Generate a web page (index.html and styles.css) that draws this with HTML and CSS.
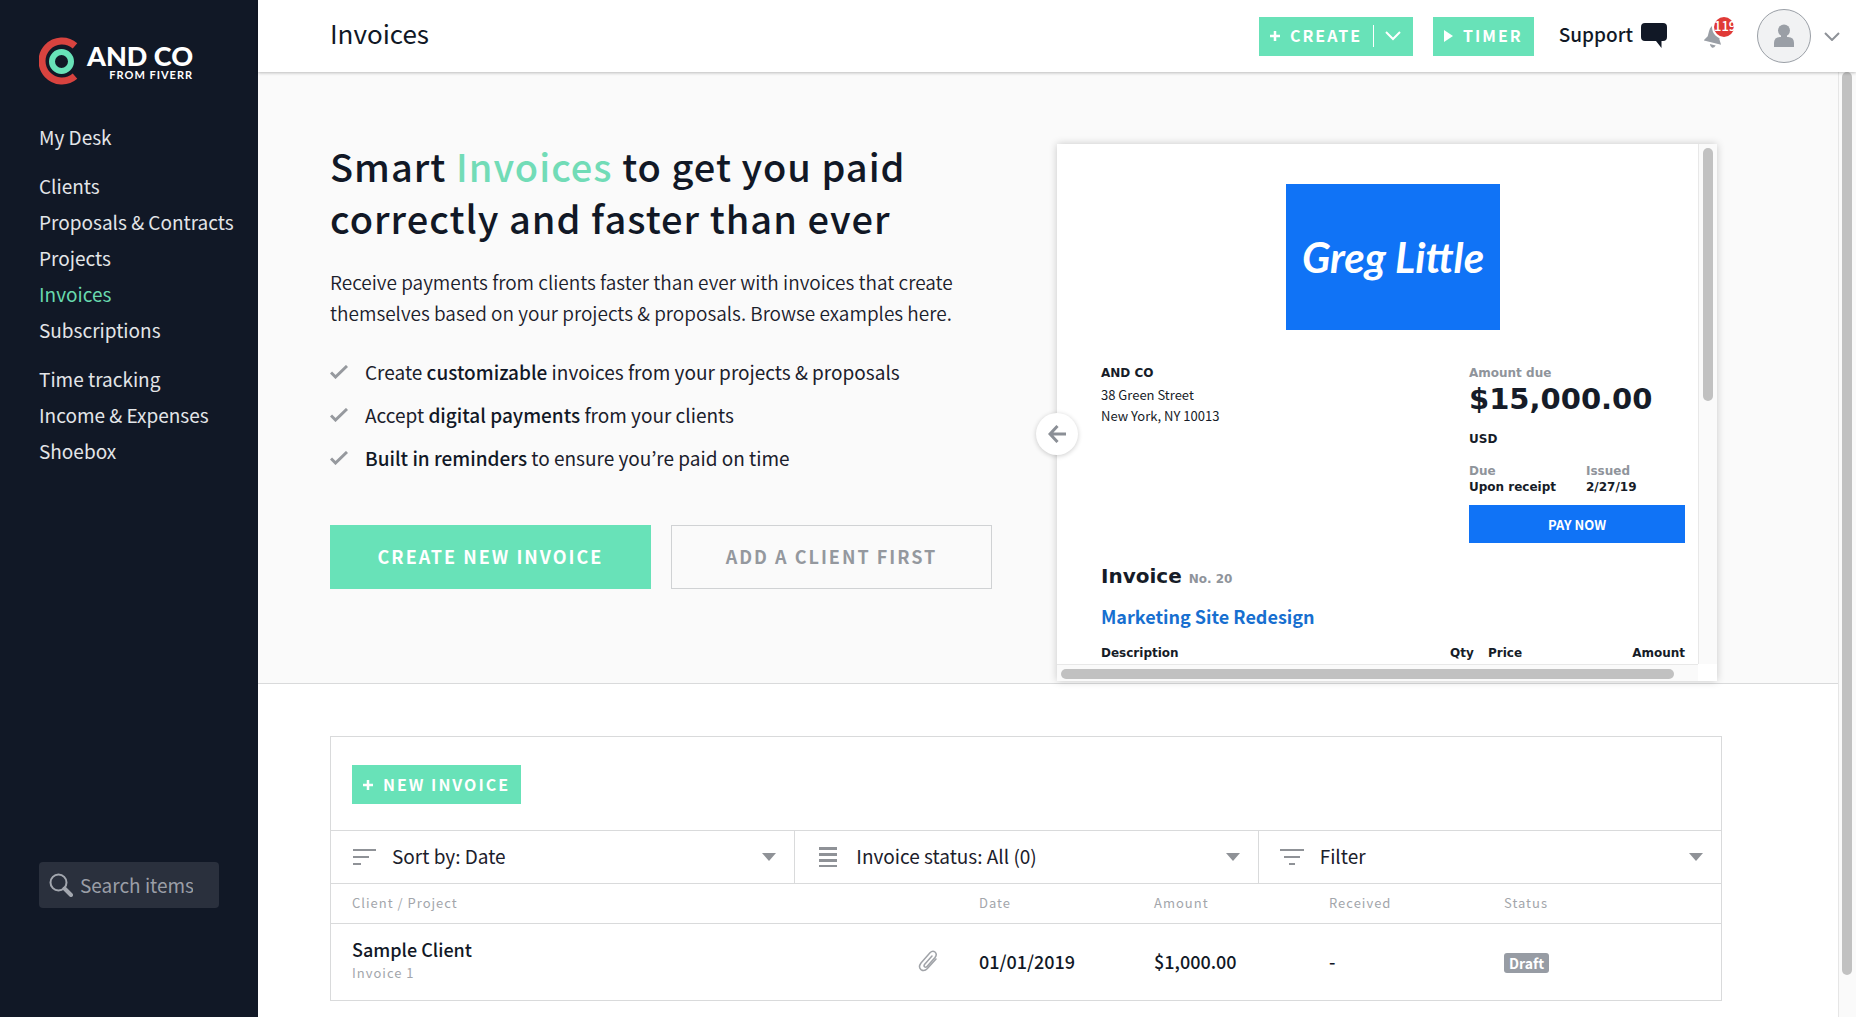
FILE: index.html
```html
<!DOCTYPE html>
<html lang="en">
<head>
    <meta charset="UTF-8">
    <meta name="viewport" content="width=device-width, initial-scale=1.0">
    <title>Invoices</title>
    <link rel="stylesheet" href="styles.css">
</head>
<body>
    <aside class="sidebar">
        <a class="logo" href="#">
            <svg class="logo-mark" width="46" height="48" viewBox="0 0 46 48" aria-hidden="true">
                <path d="M36 8.800A20 20 0 1 0 36 39.200" fill="none" stroke="#d8433f" stroke-width="7"/>
                <circle cx="22.500" cy="24.500" r="9.500" fill="none" stroke="#68e2b8" stroke-width="6"/>
            </svg>
            <span class="logo-text">
                <span class="logo-name">AND CO</span>
                <span class="logo-sub">FROM FIVERR</span>
            </span>
        </a>
        <nav class="nav">
            <ul>
                <li><a href="#">My Desk</a></li>
            </ul>
            <ul>
                <li><a href="#">Clients</a></li>
                <li><a href="#">Proposals &amp; Contracts</a></li>
                <li><a href="#">Projects</a></li>
                <li><a class="active" href="#">Invoices</a></li>
                <li><a href="#">Subscriptions</a></li>
            </ul>
            <ul>
                <li><a href="#">Time tracking</a></li>
                <li><a href="#">Income &amp; Expenses</a></li>
                <li><a href="#">Shoebox</a></li>
            </ul>
        </nav>
        <label class="search">
            <svg width="24" height="24" viewBox="0 0 24 24" fill="none" stroke="#a3a7af" aria-hidden="true">
                <circle cx="9.500" cy="9.500" r="8" stroke-width="2"/>
                <path d="M15.500 15.500L22 22" stroke-width="4" stroke-linecap="round"/>
            </svg>
            <input type="search" placeholder="Search items" aria-label="Search items">
        </label>
    </aside>

    <div class="main">
        <header class="topbar">
            <h2 class="page-title">Invoices</h2>
            <div class="create-group">
                <button class="btn btn-create" type="button">
                    <svg width="10" height="10" viewBox="0 0 10 10" stroke="#fff" stroke-width="2.500" aria-hidden="true"><path d="M5 0v10M0 5h10"/></svg>
                    <span>CREATE</span>
                </button>
                <button class="btn btn-more" type="button" aria-label="More">
                    <svg width="16" height="10" viewBox="0 0 16 10" fill="none" stroke="#fff" stroke-width="2" aria-hidden="true"><path d="M1 1l7 7 7-7"/></svg>
                </button>
            </div>
            <button class="btn btn-timer" type="button">
                <svg width="9" height="12" viewBox="0 0 9 12" fill="#fff" aria-hidden="true"><path d="M0 0l9 6-9 6z"/></svg>
                <span>TIMER</span>
            </button>
            <a class="support" href="#">
                <span>Support</span>
                <svg width="26" height="26" viewBox="0 0 26 26" fill="#111826" aria-hidden="true"><path d="M4 0h18q4 0 4 4v10q0 4-4 4h-1.500v7L15 18H4q-4 0-4-4V4q0-4 4-4z"/></svg>
            </a>
            <button class="bell" type="button" aria-label="Notifications">
                <svg width="22" height="26" viewBox="0 0 22 26" fill="#9a9fa6" aria-hidden="true">
                    <g transform="rotate(14 11 13)">
                        <path d="M10 2q6 1 6 8v5l3 5H1l3-5v-5q0-7 6-8z"/>
                        <path d="M8 22h6q-1 3-3 3t-3-3z"/>
                    </g>
                </svg>
                <span class="badge">119</span>
            </button>
            <button class="avatar" type="button" aria-label="Account">
                <svg width="20" height="24" viewBox="0 0 20 24" fill="#9a9fa6" aria-hidden="true">
                    <circle cx="10" cy="6.500" r="6"/>
                    <rect x="7" y="10" width="6" height="5"/>
                    <path d="M0 23v-4q0-6 6-6h8q6 0 6 6v4z"/>
                </svg>
            </button>
            <svg class="account-arrow" width="16" height="9" viewBox="0 0 16 9" fill="none" stroke="#8e9298" stroke-width="2" aria-hidden="true"><path d="M1 1l7 7 7-7"/></svg>
        </header>

        <div class="scroll-area">
            <main class="content">
                <section class="hero">
                    <div class="hero-text">
                        <h1>Smart <span>Invoices</span> to get you paid correctly and faster than ever</h1>
                        <p>Receive payments from clients faster than ever with invoices that create themselves based on your projects &amp; proposals. Browse examples here.</p>
                        <ul class="checks">
                            <li>
                                <svg width="18" height="14" viewBox="0 0 18 14" fill="none" stroke="#96999e" stroke-width="3" aria-hidden="true"><path d="M1 7.500l4.500 4.500L17 1"/></svg>
                                <span>Create <b>customizable</b> invoices from your projects &amp; proposals</span>
                            </li>
                            <li>
                                <svg width="18" height="14" viewBox="0 0 18 14" fill="none" stroke="#96999e" stroke-width="3" aria-hidden="true"><path d="M1 7.500l4.500 4.500L17 1"/></svg>
                                <span>Accept <b>digital payments</b> from your clients</span>
                            </li>
                            <li>
                                <svg width="18" height="14" viewBox="0 0 18 14" fill="none" stroke="#96999e" stroke-width="3" aria-hidden="true"><path d="M1 7.500l4.500 4.500L17 1"/></svg>
                                <span><b>Built in reminders</b> to ensure you’re paid on time</span>
                            </li>
                        </ul>
                        <div class="hero-buttons">
                            <button class="btn-big btn-primary" type="button">CREATE NEW INVOICE</button>
                            <button class="btn-big btn-outline" type="button">ADD A CLIENT FIRST</button>
                        </div>
                    </div>

                    <div class="preview">
                        <div class="paper">
                            <div class="brand">Greg Little</div>
                            <div class="paper-top">
                                <address>
                                    <b>AND CO</b>
                                    38 Green Street<br>
                                    New York, NY 10013
                                </address>
                                <div class="due">
                                    <div class="muted">Amount due</div>
                                    <div class="total">$15,000.00</div>
                                    <div class="currency">USD</div>
                                    <dl class="dates">
                                        <div>
                                            <dt>Due</dt>
                                            <dd>Upon receipt</dd>
                                        </div>
                                        <div>
                                            <dt>Issued</dt>
                                            <dd>2/27/19</dd>
                                        </div>
                                    </dl>
                                    <button class="pay" type="button">PAY NOW</button>
                                </div>
                            </div>
                            <h3>Invoice <small>No. 20</small></h3>
                            <h4>Marketing Site Redesign</h4>
                            <table class="lines">
                                <thead>
                                    <tr>
                                        <th>Description</th>
                                        <th class="qty">Qty</th>
                                        <th class="price">Price</th>
                                        <th class="sum">Amount</th>
                                    </tr>
                                </thead>
                            </table>
                        </div>
                        <div class="track-v"><div class="thumb"></div></div>
                        <div class="track-h"><div class="thumb"></div></div>
                        <button class="prev" type="button" aria-label="Previous">
                            <svg width="18" height="18" viewBox="0 0 18 18" fill="none" stroke="#8b8f96" stroke-width="3" aria-hidden="true"><path d="M9.500 1L2 9l7.500 8M2 9h16"/></svg>
                        </button>
                    </div>
                </section>

                <section class="invoices">
                    <div class="toolbar">
                        <button class="btn btn-new" type="button">
                            <svg width="10" height="10" viewBox="0 0 10 10" stroke="#fff" stroke-width="2.500" aria-hidden="true"><path d="M5 0v10M0 5h10"/></svg>
                            <span>NEW INVOICE</span>
                        </button>
                    </div>
                    <div class="filters">
                        <label class="filter">
                            <svg width="24" height="24" viewBox="0 0 24 24" fill="#8f9297" aria-hidden="true"><path d="M1 4h23v2H1zM1 11h16v2H1zM1 18h8v2H1z"/></svg>
                            <select aria-label="Sort">
                                <option>Sort by: Date</option>
                            </select>
                            <svg class="caret" width="14" height="8" viewBox="0 0 14 8" fill="#8f9297" aria-hidden="true"><path d="M0 0h14L7 8z"/></svg>
                        </label>
                        <label class="filter">
                            <svg width="24" height="24" viewBox="0 0 24 24" fill="#8f9297" aria-hidden="true"><path d="M3 2h18v3H3zM3 8h18v3H3zM3 14h18v3H3zM3 20h18v2H3z"/></svg>
                            <select aria-label="Invoice status">
                                <option>Invoice status: All (0)</option>
                            </select>
                            <svg class="caret" width="14" height="8" viewBox="0 0 14 8" fill="#8f9297" aria-hidden="true"><path d="M0 0h14L7 8z"/></svg>
                        </label>
                        <label class="filter">
                            <svg width="24" height="24" viewBox="0 0 24 24" fill="#8f9297" aria-hidden="true"><path d="M0 4h24v2H0zM4 11h16v2H4zM9 18h6v2H9z"/></svg>
                            <select aria-label="Filter">
                                <option>Filter</option>
                            </select>
                            <svg class="caret" width="14" height="8" viewBox="0 0 14 8" fill="#8f9297" aria-hidden="true"><path d="M0 0h14L7 8z"/></svg>
                        </label>
                    </div>
                    <table class="list">
                        <thead>
                            <tr>
                                <th>Client / Project</th>
                                <th class="col-clip"></th>
                                <th class="col">Date</th>
                                <th class="col">Amount</th>
                                <th class="col">Received</th>
                                <th class="col-status">Status</th>
                            </tr>
                        </thead>
                        <tbody>
                            <tr>
                                <td>
                                    <div>Sample Client</div>
                                    <div class="sub">Invoice 1</div>
                                </td>
                                <td>
                                    <svg class="clip" width="20" height="22" viewBox="0 0 20 22" fill="none" stroke="#a0a3a8" stroke-width="1.500" stroke-linecap="round" aria-hidden="true"><path d="M14 6L6.500 14.500q-1 1.500.2 2.400 1.200.8 2.300-.4L17 7.500q2.500-3.300 0-5.500-2.500-1.800-5 .8L3 13q-3 4 0 6.600 3.200 2.400 6.400-1L18 9"/></svg>
                                </td>
                                <td>01/01/2019</td>
                                <td>$1,000.00</td>
                                <td>-</td>
                                <td><span class="tag">Draft</span></td>
                            </tr>
                        </tbody>
                    </table>
                </section>
            </main>
            <div class="page-track"><div class="thumb"></div></div>
        </div>
    </div>
</body>
</html>
```
FILE: styles.css
```css
* {
    box-sizing: border-box;
}

body {
    display: flex;
    height: 100vh;
    margin: 0;
    overflow: hidden;
    background-color: #fff;
    color: #1b202b;
    font-family: "Noto Sans CJK KR", "Open Sans", sans-serif;
    font-size: 19px;
}

h1, h2, h3, h4, p, ul, dl, dd {
    margin: 0;
    padding: 0;
}

ul {
    list-style: none;
}

a {
    color: inherit;
    text-decoration: none;
}

button, input, select {
    font-family: inherit;
    font-size: inherit;
    color: inherit;
    border: none;
    padding: 0;
    background: none;
}

button {
    cursor: pointer;
}

svg {
    display: block;
    flex: none;
}

/* Sidebar */
.sidebar {
    display: flex;
    flex-direction: column;
    flex: none;
    width: 258px;
    padding: 37px 0 109px 39px;
    background-color: #111826;
    color: #e3e5e8;
}

.logo {
    display: flex;
    gap: 2px;
    color: #fff;
    font-family: Lato, sans-serif;
}

.logo-text {
    display: flex;
    flex-direction: column;
    align-items: flex-end;
    padding-top: 6px;
}

.logo-name {
    font-size: 27px;
    line-height: 26px;
    font-weight: 900;
}

.logo-sub {
    font-size: 11px;
    line-height: 12px;
    font-weight: 700;
    letter-spacing: 1px;
}

.nav {
    display: flex;
    flex-direction: column;
    gap: 13px;
    margin-top: 34px;
    line-height: 36px;
}

.nav .active {
    color: #68d9ae;
}

.search {
    display: flex;
    align-items: center;
    gap: 7px;
    width: 180px;
    height: 46px;
    margin-top: auto;
    padding-left: 10px;
    border-radius: 4px;
    background-color: #2a303d;
}

.search input {
    width: 130px;
    padding-bottom: 2px;
    outline: none;
}

.search input::placeholder {
    color: #9a9ea7;
    opacity: 1;
}

/* Top bar */
.main {
    display: flex;
    flex-direction: column;
    flex: 1;
    min-width: 0;
}

.topbar {
    display: flex;
    align-items: center;
    flex: none;
    height: 72px;
    padding: 0 16px 0 72px;
    background-color: #fff;
    box-shadow: 0 1px 3px rgba(0, 0, 0, 0.25);
    position: relative;
    z-index: 1;
}

.page-title {
    margin-right: auto;
    padding-bottom: 6px;
    font-size: 26px;
    line-height: 36px;
    font-weight: 400;
    color: #111826;
}

.btn {
    display: flex;
    align-items: center;
    gap: 10px;
    height: 39px;
    padding: 0 11px;
    background-color: #68e2b8;
    color: #fff;
    font-size: 16px;
    font-weight: 700;
    letter-spacing: 2px;
}

.btn span {
    padding-bottom: 2px;
}

.create-group {
    display: flex;
    align-items: center;
    margin-right: 20px;
    background-color: #68e2b8;
}

.btn-more {
    height: 22px;
    padding: 0 12px 0 11px;
    border-left: 1px solid #fff;
}

.btn-timer {
    margin-right: 25px;
}

.support {
    display: flex;
    align-items: center;
    gap: 8px;
    margin-right: 37px;
    font-weight: 500;
    color: #111826;
}

.support span {
    padding-bottom: 6px;
}

.bell {
    position: relative;
    margin-right: 31px;
}

.badge {
    position: absolute;
    top: -6px;
    left: 10px;
    width: 20px;
    height: 20px;
    border-radius: 10px;
    background-color: #e03a37;
    box-shadow: 0 0 0 2px #fff;
    color: #fff;
    font-size: 13px;
    line-height: 18px;
    font-weight: 500;
}

.avatar {
    display: flex;
    align-items: center;
    justify-content: center;
    width: 54px;
    height: 54px;
    margin-right: 13px;
    border: 1px solid #9a9fa6;
    border-radius: 50%;
    background-color: #f1f2f3;
}

/* Page body */
.scroll-area {
    display: flex;
    flex: 1;
    min-height: 0;
}

.content {
    flex: 1;
    min-width: 0;
    overflow: hidden;
}

.page-track {
    flex: none;
    width: 18px;
    padding: 0 4px 42px 3px;
    border-left: 1px solid #e6e6e6;
    background-color: #fafafa;
}

.thumb {
    border-radius: 5px;
    background-color: #c1c1c1;
}

.page-track .thumb {
    height: 100%;
}

.hero {
    display: flex;
    justify-content: space-between;
    padding: 68px 121px 2px 72px;
    border-bottom: 1px solid #d9dadb;
    background-color: #fafafa;
}

.hero-text {
    width: 662px;
}

h1 {
    width: 600px;
    font-size: 38px;
    line-height: 52px;
    font-weight: 500;
    letter-spacing: 1px;
    color: #111826;
}

h1 span {
    color: #72dcb7;
}

.hero-text p {
    margin-top: 22px;
    padding-right: 20px;
    line-height: 31px;
    font-weight: 350;
}

.checks {
    margin-top: 22px;
    line-height: 43px;
}

.checks li {
    display: flex;
    align-items: center;
    gap: 17px;
}

.checks b {
    font-weight: 500;
    color: #111826;
}

.hero-buttons {
    display: flex;
    gap: 20px;
    margin-top: 46px;
}

.btn-big {
    width: 321px;
    height: 64px;
    padding-bottom: 2px;
    font-size: 18px;
    font-weight: 700;
    letter-spacing: 2px;
}

.btn-primary {
    background-color: #68e2b8;
    color: #fff;
}

.btn-outline {
    border: 1px solid #d0d2d4;
    color: #94989e;
}

/* Invoice preview */
.preview {
    display: grid;
    grid-template-columns: 1fr 19px;
    grid-template-rows: 1fr 17px;
    width: 660px;
    margin-top: 4px;
    position: relative;
    background-color: #fff;
    box-shadow: 0 0 8px rgba(0, 0, 0, 0.2);
    color: #161c28;
}

.paper {
    padding: 40px 13px 0 44px;
    font-family: "DejaVu Sans", sans-serif;
    font-size: 12px;
    font-weight: 700;
}

.brand {
    width: 214px;
    margin: 0 auto 33px;
    background-color: #1073f6;
    color: #fff;
    font-family: Lato, cursive;
    font-size: 42px;
    line-height: 146px;
    font-style: italic;
    text-align: center;
    white-space: nowrap;
}

.paper-top {
    display: flex;
    justify-content: space-between;
    line-height: 21px;
}

address {
    font-family: "Noto Sans CJK KR", sans-serif;
    font-size: 13px;
    font-style: normal;
    font-weight: 400;
}

address b {
    display: block;
    font-family: "DejaVu Sans", sans-serif;
    font-size: 12px;
}

.due {
    width: 216px;
}

.muted, .dates dt {
    color: #8f949b;
}

.total {
    font-size: 29px;
    line-height: 30px;
}

.currency {
    margin: 15px 0 13px;
}

.dates {
    display: grid;
    grid-template-columns: 117px 1fr;
    line-height: 16px;
}

.pay {
    width: 100%;
    height: 38px;
    margin-top: 10px;
    background-color: #1073f6;
    color: #fff;
    font-family: "Noto Sans CJK KR", sans-serif;
    font-size: 13px;
    font-weight: 700;
}

h3 {
    margin-top: 20px;
    font-size: 20px;
    line-height: 26px;
}

h3 small {
    font-size: 12px;
    color: #8f949b;
}

h4 {
    margin: 12px 0 14px;
    font-family: "Noto Sans CJK KR", sans-serif;
    font-size: 18px;
    line-height: 24px;
    color: #176fd0;
}

.lines {
    width: 100%;
    border-collapse: collapse;
    line-height: 22px;
}

.lines th {
    padding: 0;
    text-align: left;
}

.lines .qty {
    width: 38px;
}

.lines .price {
    width: 98px;
}

.lines .sum {
    width: 99px;
    text-align: right;
}

.track-v {
    padding: 4px;
    border-left: 1px solid #e8e8e8;
    background-color: #fafafa;
}

.track-v .thumb {
    height: 253px;
}

.track-h {
    padding: 4px 24px 4px 4px;
    border-top: 1px solid #e8e8e8;
    background-color: #fafafa;
}

.track-h .thumb {
    height: 10px;
}

.prev {
    position: absolute;
    top: 269px;
    left: -21px;
    display: flex;
    align-items: center;
    justify-content: center;
    width: 42px;
    height: 42px;
    border-radius: 50%;
    background-color: #fff;
    box-shadow: 0 1px 5px rgba(0, 0, 0, 0.2);
}

/* Invoice list */
.invoices {
    margin: 52px 116px 0 72px;
    border: 1px solid #d9dadb;
}

.toolbar {
    padding: 28px 21px 26px;
}

.filters {
    display: grid;
    grid-template-columns: repeat(3, 1fr);
    border: solid #d9dadb;
    border-width: 1px 0;
}

.filter {
    display: flex;
    align-items: center;
    gap: 16px;
    height: 52px;
    padding: 0 18px 0 21px;
}

.filter + .filter {
    border-left: 1px solid #d9dadb;
}

.filter select {
    flex: 1;
    padding-bottom: 4px;
    appearance: none;
    outline: none;
}

.list {
    width: 100%;
    border-collapse: collapse;
    table-layout: fixed;
    text-align: left;
    font-size: 18px;
    font-weight: 500;
    color: #111826;
}

.list th, .list td {
    padding: 0 0 2px 21px;
}

.list th {
    height: 39px;
    border-bottom: 1px solid #d9dadb;
    font-size: 13px;
    font-weight: 400;
    letter-spacing: 1px;
    color: #a3a6ab;
}

.list td {
    height: 77px;
    line-height: 24px;
}

.col-clip {
    width: 61px;
}

.col {
    width: 175px;
}

.col-status {
    width: 238px;
}

.sub {
    font-size: 13px;
    font-weight: 400;
    letter-spacing: 1px;
    color: #a3a6ab;
}

.tag {
    display: inline-block;
    padding: 0 5px;
    border-radius: 3px;
    background-color: #979ca4;
    color: #fff;
    font-size: 14px;
    line-height: 20px;
    font-weight: 700;
}
```
